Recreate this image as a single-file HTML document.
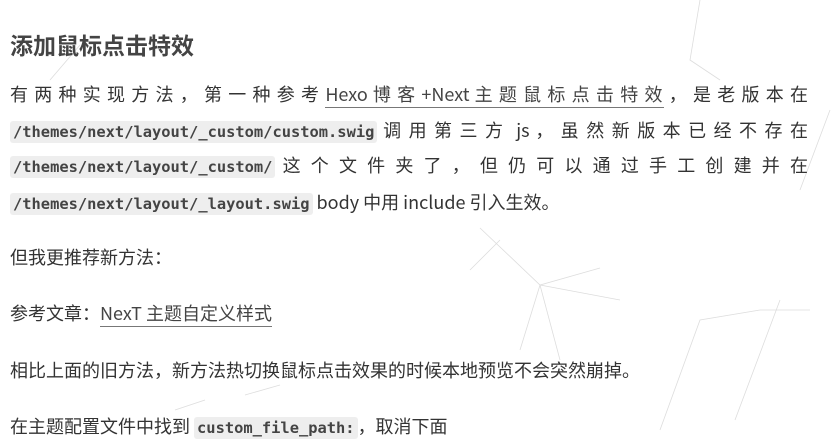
<!DOCTYPE html>
<html><head><meta charset="utf-8"><style>
body{margin:0;width:839px;height:437px;background:#fff;overflow:hidden;position:relative;font-family:"Noto Sans CJK SC","Liberation Sans",sans-serif;color:#333;}
.l{position:absolute;left:10px;width:798px;font-size:18px;line-height:26px;white-space:nowrap;}
.j{white-space:normal;text-align:justify;text-align-last:justify;height:30px;overflow:hidden;}
code{font-family:"DejaVu Sans Mono","Liberation Mono",monospace;font-size:15.4px;font-weight:bold;background:#eee;border-radius:3px;padding:2px 3px;color:#444;}
a{color:#444;text-decoration:none;border-bottom:1px solid #777;}
h2{position:absolute;left:10px;top:28px;margin:0;font-size:23px;line-height:32px;font-weight:bold;color:#444;}
svg{position:absolute;left:0;top:0}
</style></head><body>
<svg width="839" height="437"><g stroke="#ddd" stroke-width="0.8" fill="none">
<path d="M480 228 L540 285 L600 268 M540 285 L520 350 M540 285 L560 360 M500 240 L470 270 M540 285 L620 300"/>
<path d="M660 430 L700 320 L760 310 M735 420 L780 300 M760 310 L810 310"/>
<path d="M700 0 L690 60 L720 80 M800 190 L830 110"/>
<path d="M50 80 L80 45 M245 395 L280 385 M175 410 L205 400"/>
</g></svg>
<h2>添加鼠标点击特效</h2>
<div class="l j" style="top:81px">有 两 种 实 现 方 法 ， 第 一 种 参 考 <a>Hexo 博 客 +Next 主 题 鼠 标 点 击 特 效</a> ， 是 老 版 本 在</div>
<div class="l j" style="top:117px"><code>/themes/next/layout/_custom/custom.swig</code> 调 用 第 三 方 &nbsp;js ， 虽 然 新 版 本 已 经 不 存 在</div>
<div class="l j" style="top:152px"><code>/themes/next/layout/_custom/</code> 这 个 文 件 夹 了 ， 但 仍 可 以 通 过 手 工 创 建 并 在</div>
<div class="l" style="top:189px"><code>/themes/next/layout/_layout.swig</code> body 中用 include 引入生效。</div>
<div class="l" style="top:244px">但我更推荐新方法：</div>
<div class="l" style="top:300px">参考文章：<a>NexT 主题自定义样式</a></div>
<div class="l" style="top:357px">相比上面的旧方法，新方法热切换鼠标点击效果的时候本地预览不会突然崩掉。</div>
<div class="l" style="top:413px">在主题配置文件中找到 <code>custom_file_path:</code>，取消下面</div>
</body></html>
